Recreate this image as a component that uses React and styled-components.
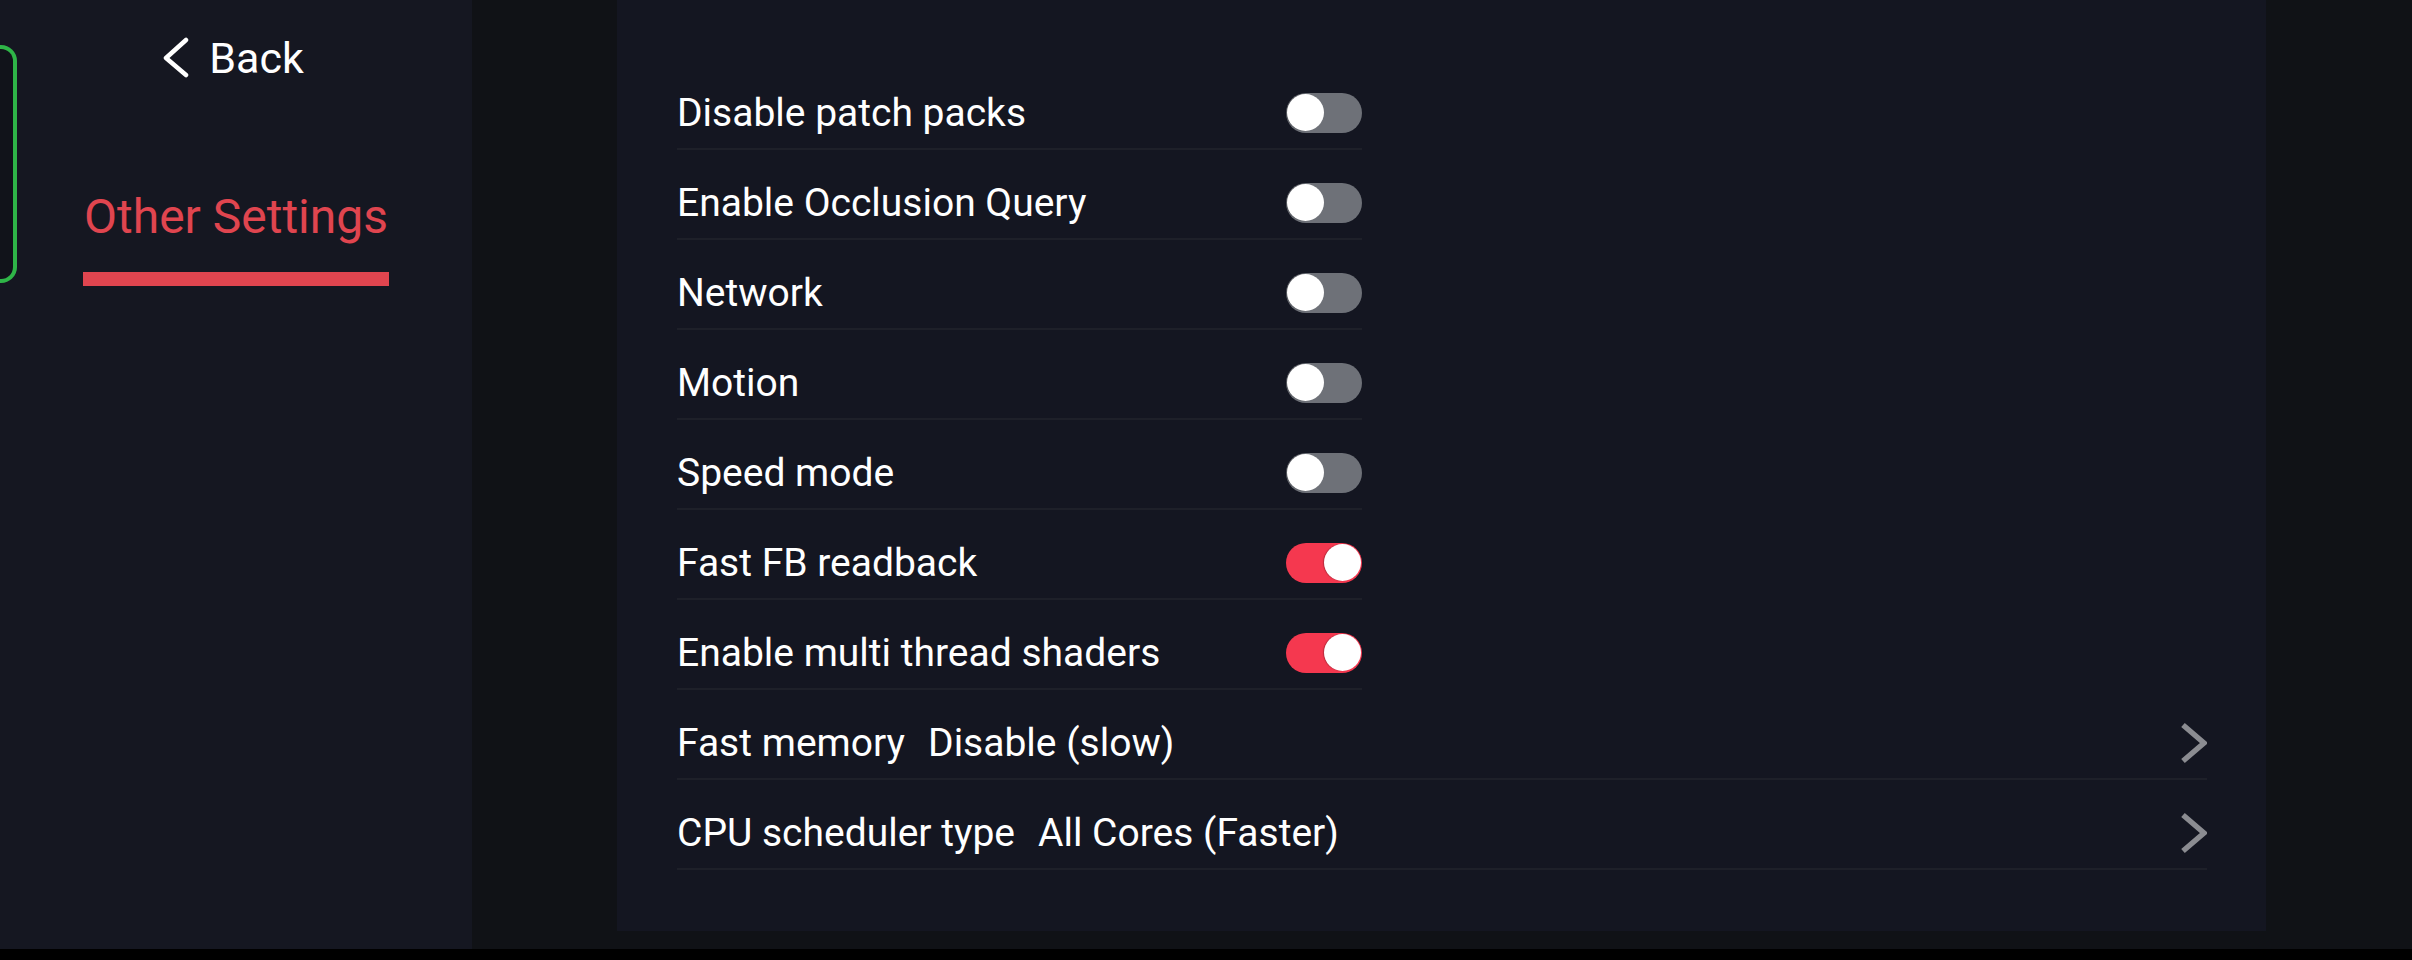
import React, { useState } from 'react';
import styled, { createGlobalStyle } from 'styled-components';

const GlobalStyle = createGlobalStyle`
  html, body {
    margin: 0;
    padding: 0;
    background: #000;
  }
  body {
    font-family: Roboto, "Noto Sans", sans-serif;
    color: #fff;
  }
`;

const Screen = styled.div`
  width: 2412px;
  height: 960px;
  display: flex;
  flex-direction: column;
  overflow: hidden;
  background: #000;
`;

const Main = styled.div`
  height: 949px;
  display: flex;
`;

const BottomBar = styled.div`
  flex: 1;
  background: #000;
`;

const Sidebar = styled.aside`
  width: 472px;
  flex-shrink: 0;
  background: #151721;
  display: flex;
  align-items: flex-start;
`;

const Rail = styled.div`
  width: 17px;
  height: 238px;
  margin-top: 45px;
  box-sizing: border-box;
  border: 4px solid #2fb548;
  border-left: none;
  border-radius: 0 16px 16px 0;
  background: #11131a;
  flex-shrink: 0;
`;

const Nav = styled.nav`
  flex: 1;
  padding-right: 17px;
  padding-top: 18px;
  display: flex;
  flex-direction: column;
  align-items: center;
`;

const BackButton = styled.button`
  height: 80px;
  display: flex;
  align-items: center;
  gap: 18px;
  background: none;
  border: none;
  padding: 0;
  margin-left: -5px;
  color: #fff;
  font-family: Roboto, sans-serif;
  font-size: 43px;
  cursor: pointer;
`;

const Tab = styled.div`
  margin-top: 91px;
  display: flex;
  flex-direction: column;
  align-items: stretch;
  gap: 27px;
`;

const TabLabel = styled.span`
  font-size: 48px;
  color: #e0454f;
  line-height: 56px;
  padding: 0 1px;
`;

const TabBar = styled.div`
  height: 14px;
  background: #e0454f;
`;

const Content = styled.div`
  flex: 1;
  background: #101216;
  padding-left: 145px;
  padding-bottom: 18px;
  display: flex;
`;

const Panel = styled.section`
  width: 1649px;
  box-sizing: border-box;
  background: #141621;
  padding: 60px 59px 0 60px;
  display: flex;
  flex-direction: column;
  align-items: flex-start;
`;

const Row = styled.div`
  width: ${p => (p.$compact ? '685px' : '100%')};
  height: 90px;
  box-sizing: border-box;
  padding-top: 17px;
  border-bottom: 2px solid #1e2029;
  display: flex;
  align-items: center;
  gap: 23px;
  cursor: pointer;
`;

const Label = styled.span`
  font-size: 39px;
  color: #fff;
`;

const Value = styled.span`
  font-size: 39px;
  color: #fff;
`;

const Track = styled.button`
  margin-left: auto;
  width: 76px;
  height: 40px;
  border-radius: 20px;
  border: none;
  padding: 0 1px;
  display: flex;
  align-items: center;
  justify-content: ${p => (p.$on ? 'flex-end' : 'flex-start')};
  background: ${p => (p.$on ? '#f5384f' : '#6e7178')};
  cursor: pointer;
`;

const Knob = styled.span`
  width: 37px;
  height: 37px;
  border-radius: 50%;
  background: #fff;
  box-shadow: -1px 0 1px rgba(0, 0, 0, 0.25);
`;

const Arrow = styled.svg`
  margin-left: auto;
  flex-shrink: 0;
`;

const settings = [
  { label: 'Disable patch packs', on: false },
  { label: 'Enable Occlusion Query', on: false },
  { label: 'Network', on: false },
  { label: 'Motion', on: false },
  { label: 'Speed mode', on: false },
  { label: 'Fast FB readback', on: true },
  { label: 'Enable multi thread shaders', on: true },
  { label: 'Fast memory', value: 'Disable (slow)' },
  { label: 'CPU scheduler type', value: 'All Cores (Faster)' },
];

const BackIcon = () => (
  <svg width="28" height="42" viewBox="0 0 28 42">
    <polyline
      points="23,3 3,21 23,38"
      fill="none"
      stroke="#fff"
      strokeWidth="4.5"
      strokeLinecap="round"
      strokeLinejoin="round"
    />
  </svg>
);

const ChevronRight = () => (
  <Arrow width="26" height="42" viewBox="0 0 26 42">
    <polyline
      points="2,3 23,21 2,39"
      fill="none"
      stroke="#8b8c91"
      strokeWidth="5.5"
      strokeLinejoin="miter"
    />
  </Arrow>
);

const App = () => {
  const [items, setItems] = useState(settings);

  const flip = i =>
    setItems(list => list.map((s, j) => (j === i ? { ...s, on: !s.on } : s)));

  return (
    <Screen>
      <GlobalStyle />
      <Main>
        <Sidebar>
          <Rail />
          <Nav>
            <BackButton>
              <BackIcon />
              Back
            </BackButton>
            <Tab>
              <TabLabel>Other Settings</TabLabel>
              <TabBar />
            </Tab>
          </Nav>
        </Sidebar>
        <Content>
          <Panel>
            {items.map((s, i) =>
              s.value === undefined ? (
                <Row key={s.label} $compact onClick={() => flip(i)}>
                  <Label>{s.label}</Label>
                  <Track $on={s.on}>
                    <Knob />
                  </Track>
                </Row>
              ) : (
                <Row key={s.label}>
                  <Label>{s.label}</Label>
                  <Value>{s.value}</Value>
                  <ChevronRight />
                </Row>
              )
            )}
          </Panel>
        </Content>
      </Main>
      <BottomBar />
    </Screen>
  );
};

export default App;
